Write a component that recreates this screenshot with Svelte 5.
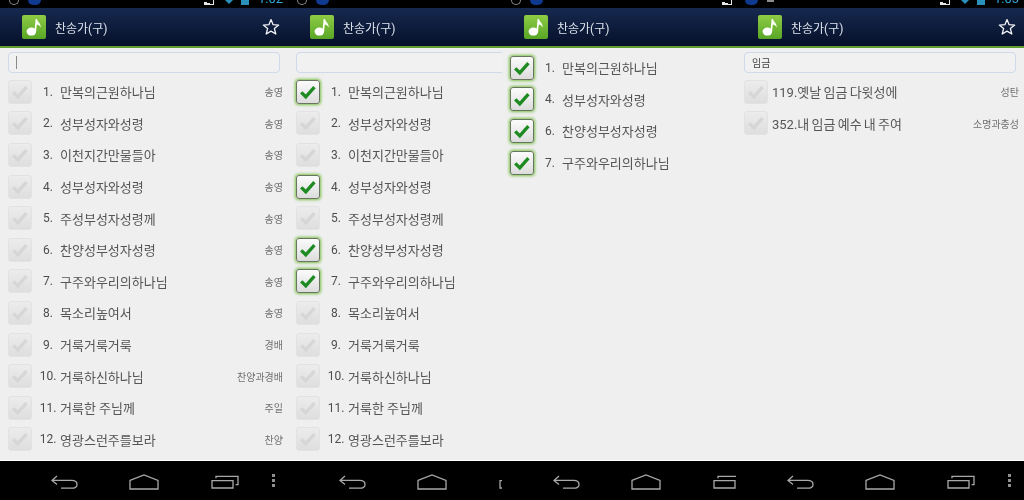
<script lang="ts">
  type Hymn = { no: string; name: string; tag: string; on?: boolean }

  const hymns: Hymn[] = [
    { no: '1.', name: '만복의근원하나님', tag: '송영', on: true },
    { no: '2.', name: '성부성자와성령', tag: '송영' },
    { no: '3.', name: '이천지간만물들아', tag: '송영' },
    { no: '4.', name: '성부성자와성령', tag: '송영', on: true },
    { no: '5.', name: '주성부성자성령께', tag: '송영' },
    { no: '6.', name: '찬양성부성자성령', tag: '송영', on: true },
    { no: '7.', name: '구주와우리의하나님', tag: '송영', on: true },
    { no: '8.', name: '목소리높여서', tag: '송영' },
    { no: '9.', name: '거룩거룩거룩', tag: '경배' },
    { no: '10.', name: '거룩하신하나님', tag: '찬양과경배' },
    { no: '11.', name: '거룩한 주님께', tag: '주일' },
    { no: '12.', name: '영광스런주를보라', tag: '찬양' }
  ]

  // p2 and p3 are overlapped by the next screen, so their tags never show
  const panels = [
    { cls: 'p1', left: ['pin', 'dot'], right: ['sig', 'wifi', 'batt'], time: '1:02', search: '', caret: true, star: true, tags: true, rows: hymns.map((h) => ({ ...h, on: false })) },
    { cls: 'p2', left: ['pin', 'dot'], right: ['sig'], time: '', search: '', caret: false, star: false, tags: false, rows: hymns },
    { cls: 'p3', left: ['pin', 'dot'], right: ['sig', 'wifi'], time: '', search: null, caret: false, star: false, tags: false, rows: hymns.filter((h) => h.on) },
    { cls: 'p4', left: ['dot', 'bar'], right: ['sig', 'wifi', 'batt'], time: '1:03', search: '임금', caret: false, star: true, tags: true, rows: [
      { no: '', name: '119.옛날 임금 다윗성에', tag: '성탄', on: false },
      { no: '', name: '352.내 임금 예수 내 주여', tag: '소명과충성', on: false }
    ] }
  ]
</script>

{#snippet statusIcon(kind: string)}
  <span class="si {kind}"></span>
{/snippet}

<div class="screen">
  {#each panels as p}
    <section class="panel {p.cls}">
      <div class="inner">
        <div class="status">
          <div class="status-left">
            {#each p.left as k}{@render statusIcon(k)}{/each}
          </div>
          <div class="status-right">
            {#each p.right as k}{@render statusIcon(k)}{/each}
            <span class="time">{p.time}</span>
          </div>
        </div>

        <header class="appbar">
          <div class="logo">
            <svg viewBox="0 0 24 24" width="24" height="24">
              <ellipse cx="9.4" cy="16.6" rx="4.8" ry="4" fill="#fff" />
              <path d="M12.4 16.4 L13.6 4 L15 4 C15.4 7.2 19.2 8.2 18.6 12.6 C17.8 10.4 16.2 9.6 14.8 9.4 L14 16.8 Z" fill="#fff" />
            </svg>
          </div>
          <span class="title">찬송가(구)</span>
          {#if p.star}
            <svg class="star" viewBox="0 0 18 18" width="18" height="18">
              <path d="M9 1.6 L11.1 6.7 L16.7 7.1 L12.4 10.6 L13.8 16 L9 13.1 L4.2 16 L5.6 10.6 L1.3 7.1 L6.9 6.7 Z" fill="none" stroke="#f2f4f7" stroke-width="1.3" stroke-linejoin="round" />
            </svg>
          {/if}
        </header>

        <main class="content">
          {#if p.search !== null}
            <div class="search">
              {#if p.caret}<span class="caret"></span>{/if}
              {p.search}
            </div>
          {/if}
          <div class="rows">
            {#each p.rows as r}
              <div class="row">
                <span class="box" class:on={r.on}>
                  <svg viewBox="0 0 24 24" width="22" height="22">
                    <path d="M4.6 12.4 L9.6 17.2 L19 6.6" fill="none" stroke-width="3.6" />
                  </svg>
                </span>
                {#if r.no}
                  <span class="no">{r.no}</span>
                {/if}
                <span class="name" class:plain={!r.no}>{r.name}</span>
                {#if p.tags}
                  <span class="tag">{r.tag}</span>
                {/if}
              </div>
            {/each}
          </div>
        </main>

        <nav class="navbar">
          <svg viewBox="0 0 27 14" width="27" height="14" fill="none" stroke="#a9a9a9" stroke-width="1.3">
            <path d="M6 1 L1 5.4 L6 9.4 M1 5.4 H20.5 C24 5.4 26 7.2 26 9.4 C26 11.6 24 13.2 20.5 13.2 H10" />
          </svg>
          <svg viewBox="0 0 30 16" width="30" height="16" fill="none" stroke="#a9a9a9" stroke-width="1.3">
            <path d="M1 6.4 L15 1 L29 6.4 V15 H1 Z" />
          </svg>
          <svg viewBox="0 0 28 14" width="28" height="14" fill="none" stroke="#a9a9a9" stroke-width="1.3">
            <path d="M1 5.6 H22 V13 H1 Z M5 3.2 V1.4 H27 V9.6 H24.6" />
          </svg>
          <span class="dots"><i></i><i></i><i></i></span>
        </nav>
      </div>
    </section>
  {/each}
</div>

<style>
  :global(body) {
    margin: 0;
    background: #000;
  }

  .screen {
    display: flex;
    width: 1024px;
    height: 500px;
    overflow: hidden;
    font-family: Roboto, "Noto Sans CJK KR", sans-serif;
  }

  .panel {
    height: 500px;
    overflow: hidden;
    flex: none;
  }

  .p1, .p4 { width: 288px; }
  .p2 { width: 214px; }
  .p3 { width: 234px; }

  .inner {
    width: 288px;
    height: 500px;
    display: flex;
    flex-direction: column;
    filter: blur(0.35px);
  }

  .status {
    height: 8px;
    flex: none;
    background: #000;
    display: flex;
    justify-content: space-between;
    overflow: hidden;
    padding: 0 6px 0 9px;
    box-sizing: border-box;
  }

  .status-left, .status-right {
    display: flex;
    align-items: flex-start;
    gap: 9px;
  }

  .si {
    display: block;
    flex: none;
    box-sizing: border-box;
  }

  .si.pin {
    width: 10px;
    height: 5px;
    border: 1px solid #8a8a8a;
    border-top: none;
    border-radius: 0 0 6px 6px;
  }

  .si.dot {
    width: 13px;
    height: 5px;
    background: #0f3a8f;
    border-radius: 0 0 7px 7px;
  }

  .si.bar {
    width: 7px;
    height: 2px;
    background: #8c8c8c;
  }

  .si.sig {
    width: 11px;
    height: 5px;
    margin-right: 1px;
    background: linear-gradient(90deg, transparent 9px, #e8e8e8 9px, #e8e8e8 10px, transparent 10px), linear-gradient(200deg, transparent 60%, #e8e8e8 60%);
  }

  .si.wifi {
    width: 8px;
    height: 4px;
    background: #2a91bd;
    clip-path: polygon(0 0, 100% 0, 50% 100%);
  }

  .si.batt {
    width: 8px;
    height: 5px;
    margin-left: -1px;
    background: #2a91bd;
  }

  .time {
    width: 24px;
    margin-top: -8px;
    color: #2fa6d8;
    font-size: 13px;
    line-height: 13px;
  }

  .appbar {
    height: 38px;
    flex: none;
    display: flex;
    align-items: center;
    padding-left: 22px;
    background: linear-gradient(#16294f, #061029);
    border-bottom: 2px solid #5f9e2f;
    color: #dfe4ec;
  }

  .logo {
    width: 24px;
    height: 24px;
    flex: none;
    border-radius: 2px;
    background: linear-gradient(#8fcc45, #58a626);
  }

  .logo svg {
    display: block;
  }

  .title {
    margin-left: 9px;
    font-size: 12px;
  }

  .star {
    margin-left: auto;
    margin-right: 8px;
    flex: none;
  }

  .content {
    flex: 1;
    min-height: 0;
    background: #efefef;
    padding: 4px 0 0;
    border-bottom: 1px solid #fff;
    overflow: hidden;
  }

  .search {
    height: 21px;
    box-sizing: border-box;
    margin: 0 8px;
    padding-left: 7px;
    display: flex;
    align-items: center;
    border: 1px solid #cfd9ea;
    border-radius: 4px;
    background: #f1f1f1;
    font-size: 10px;
    color: #444;
  }

  .caret {
    width: 1px;
    height: 13px;
    background: #8a8a8a;
  }

  .search + .rows {
    margin-top: 3px;
  }

  .row {
    height: 31.6px;
    display: flex;
    align-items: center;
    padding: 0 5px 0 8px;
  }

  .box {
    width: 24px;
    height: 24px;
    flex: none;
    box-sizing: border-box;
    display: flex;
    align-items: center;
    justify-content: center;
    border: 1px solid #e2e2e2;
    border-radius: 3px;
    background: linear-gradient(#ececec, #dedede);
    stroke: #d6d6d6;
  }

  .box path {
    stroke: inherit;
  }

  .box.on {
    border: 1px solid #6a7560;
    background: linear-gradient(#fbfbfb, #dcdcdc);
    box-shadow: 0 0 3px 1px #7cc04a;
    stroke: #1d8a22;
  }

  .no {
    width: 24px;
    margin-left: 4px;
    flex: none;
    text-align: center;
    font-size: 12px;
    color: #4d4d4d;
  }

  .name {
    flex: 1;
    font-size: 13px;
    color: #555;
    white-space: nowrap;
  }

  .name.plain {
    margin-left: 4px;
    word-spacing: -1px;
  }

  .tag {
    flex: none;
    font-size: 10px;
    color: #707070;
  }

  .navbar {
    height: 39px;
    flex: none;
    background: #000;
    display: grid;
    grid-template-columns: 78px 82px 61px 1fr;
    align-items: center;
    padding: 0 0 0 51px;
    box-sizing: border-box;
  }

  .navbar svg {
    display: block;
    margin-top: 3px;
  }

  .dots {
    display: flex;
    flex-direction: column;
    gap: 2px;
  }

  .dots i {
    display: block;
    width: 3px;
    height: 3px;
    background: #8f8f8f;
  }
</style>
